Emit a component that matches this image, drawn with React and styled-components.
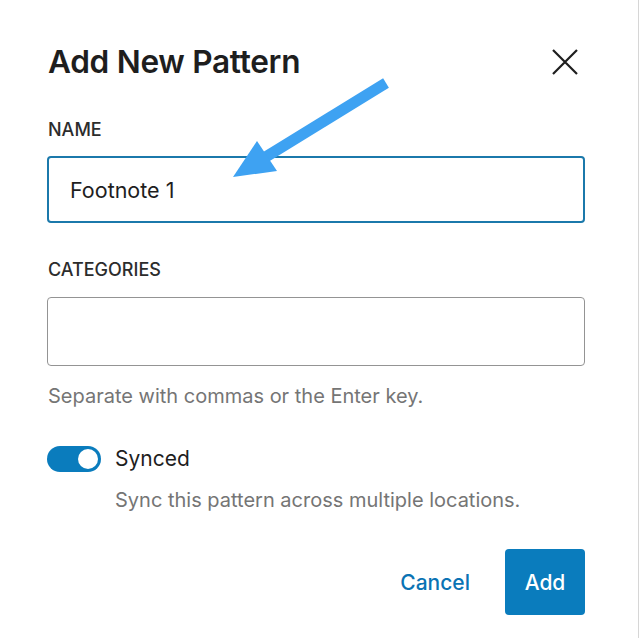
import React from "react";
import styled, { createGlobalStyle } from "styled-components";

const GlobalStyle = createGlobalStyle`
  html, body {
    margin: 0;
    padding: 0;
    background: #fff;
  }
  body {
    font-family: Inter, "Noto Sans", "Liberation Sans", sans-serif;
    color: #1e1e1e;
  }
`;

const Modal = styled.div`
  position: relative;
  box-sizing: border-box;
  width: 639px;
  height: 638px;
  border-right: 1px solid #d6d6d6;
  padding: 42px 53px 0 47px;
  background: #fff;
`;

const Header = styled.div`
  display: flex;
  align-items: center;
  justify-content: space-between;
  height: 40px;
  padding-left: 1px;
`;

const Title = styled.h1`
  margin: 0;
  font-size: 31.6px;
  line-height: 40px;
  font-weight: 600;
  letter-spacing: -0.3px;
  color: #1e1e1e;
`;

const CloseButton = styled.button`
  display: flex;
  align-items: center;
  justify-content: center;
  width: 32px;
  height: 32px;
  margin-right: 4px;
  padding: 0;
  border: none;
  background: none;
  cursor: pointer;
`;

const Field = styled.div`
  margin-top: ${p => p.top}px;
`;

const Label = styled.label`
  display: block;
  padding-left: 1px;
  font-size: 18px;
  line-height: 24px;
  font-weight: 500;
  text-transform: uppercase;
  color: #2c2c2c;
`;

const Input = styled.input`
  display: block;
  box-sizing: border-box;
  width: 100%;
  height: ${p => (p.focused ? 67 : 69)}px;
  margin-top: ${p => (p.focused ? 14 : 15)}px;
  padding: 0 21px;
  font-family: inherit;
  font-size: 21.5px;
  color: #1e1e1e;
  background: #fff;
  border: ${p => (p.focused ? "2px solid #1b79ab" : "1px solid #949494")};
  border-radius: 4px;
  outline: none;
`;

const Help = styled.p`
  margin: ${p => p.top}px 0 0 ${p => (p.indent || 0) + 1}px;
  font-size: 20px;
  line-height: 24px;
  color: #757575;
`;

const ToggleRow = styled.div`
  display: flex;
  align-items: center;
  gap: 14px;
  margin-top: 38px;
  height: 26px;
`;

const Track = styled.span`
  position: relative;
  display: inline-block;
  width: 54px;
  height: 26px;
  border-radius: 13px;
  background: #0a7cbd;
`;

const Knob = styled.span`
  position: absolute;
  top: 3px;
  right: 3px;
  width: 20px;
  height: 20px;
  border-radius: 50%;
  background: #fff;
`;

const ToggleLabel = styled.span`
  font-size: 21px;
  line-height: 26px;
  color: #1e1e1e;
`;

const Footer = styled.div`
  display: flex;
  justify-content: flex-end;
  align-items: center;
  gap: 19px;
  margin-top: 37px;
`;

const Button = styled.button`
  height: 66px;
  width: ${p => (p.primary ? "80px" : "auto")};
  padding: 0 ${p => (p.primary ? 0 : 16)}px;
  font-family: inherit;
  font-size: 21px;
  font-weight: 500;
  border: none;
  border-radius: 4px;
  cursor: pointer;
  color: ${p => (p.primary ? "#fff" : "#0a73b4")};
  background: ${p => (p.primary ? "#0a7cbd" : "transparent")};
`;

const ArrowOverlay = styled.svg`
  position: absolute;
  left: 0;
  top: 0;
  pointer-events: none;
`;

function CloseIcon() {
  return (
    <svg width="26" height="26" viewBox="0 0 26 26">
      <path d="M1 1 L25 25 M25 1 L1 25" stroke="#1e1e1e" strokeWidth="2.2" fill="none" />
    </svg>
  );
}

export default function App() {
  return (
    <>
      <GlobalStyle />
      <Modal>
        <Header>
          <Title>Add New Pattern</Title>
          <CloseButton aria-label="Close">
            <CloseIcon />
          </CloseButton>
        </Header>

        <Field top={36}>
          <Label>Name</Label>
          <Input focused defaultValue="Footnote 1" />
        </Field>

        <Field top={35}>
          <Label>Categories</Label>
          <Input />
        </Field>
        <Help top={18}>Separate with commas or the Enter key.</Help>

        <ToggleRow>
          <Track>
            <Knob />
          </Track>
          <ToggleLabel>Synced</ToggleLabel>
        </ToggleRow>
        <Help top={16} indent={67}>Sync this pattern across multiple locations.</Help>

        <Footer>
          <Button>Cancel</Button>
          <Button primary>Add</Button>
        </Footer>

        {/* annotation arrow drawn over the dialog */}
        <ArrowOverlay width="639" height="638" viewBox="0 0 639 638">
          <line x1="386" y1="83" x2="264" y2="158" stroke="#3ea2f2" strokeWidth="11" />
          <polygon points="233,177 257,141 277,171" fill="#3ea2f2" />
        </ArrowOverlay>
      </Modal>
    </>
  );
}
